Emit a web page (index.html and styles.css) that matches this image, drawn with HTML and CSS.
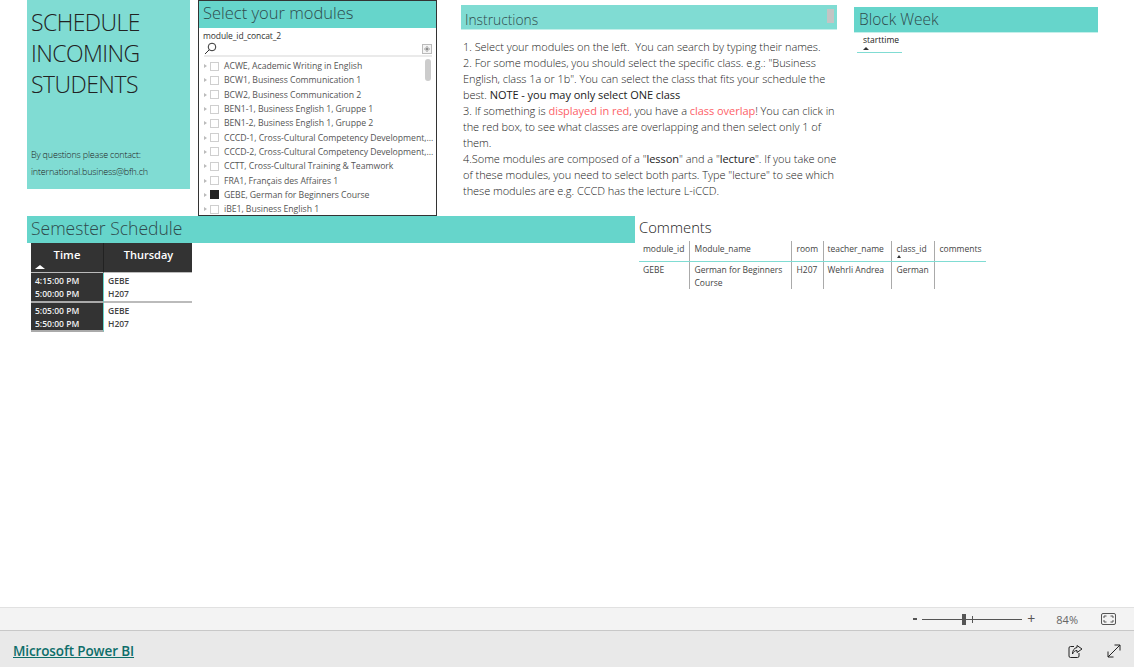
FILE: index.html
```html
<!DOCTYPE html>
<html lang="en">
<head>
  <meta charset="UTF-8">
  <meta name="viewport" content="width=device-width, initial-scale=1.0">
  <title>Schedule Incoming Students</title>
  <link rel="stylesheet" href="styles.css">
</head>
<body>
  <main class="report">
    <div class="top-row">
      <section class="title-card">
        <h1>SCHEDULE<br>INCOMING<br>STUDENTS</h1>
        <p>By questions please contact:<br>international.business@bfh.ch</p>
      </section>

      <section class="slicer">
        <h2 class="band">Select your modules</h2>
        <div class="slicer-name">module_id_concat_2</div>
        <div class="slicer-search">
          <svg width="13" height="13" viewBox="0 0 13 13" fill="none" stroke="#333"><circle cx="8" cy="5" r="3.8"/><path d="M5.2 7.8 1 12"/></svg>
          <span class="expand-box"><svg width="9" height="9" viewBox="0 0 9 9" fill="none" stroke="#666"><path d="M0 4.500h3.500M9 4.500H5.500M4.500 0v3.500M4.500 9V5.500M2.500 2.500l4 4M6.500 2.500l-4 4"/></svg></span>
        </div>
        <div class="slicer-list">
          <ul>
            <li><i class="caret"></i><i class="check"></i>ACWE, Academic Writing in English</li>
            <li><i class="caret"></i><i class="check"></i>BCW1, Business Communication 1</li>
            <li><i class="caret"></i><i class="check"></i>BCW2, Business Communication 2</li>
            <li><i class="caret"></i><i class="check"></i>BEN1-1, Business English 1, Gruppe 1</li>
            <li><i class="caret"></i><i class="check"></i>BEN1-2, Business English 1, Gruppe 2</li>
            <li><i class="caret"></i><i class="check"></i>CCCD-1, Cross-Cultural Competency Development,...</li>
            <li><i class="caret"></i><i class="check"></i>CCCD-2, Cross-Cultural Competency Development,...</li>
            <li><i class="caret"></i><i class="check"></i>CCTT, Cross-Cultural Training &amp; Teamwork</li>
            <li><i class="caret"></i><i class="check"></i>FRA1, Français des Affaires 1</li>
            <li><i class="caret"></i><i class="check on"></i>GEBE, German for Beginners Course</li>
            <li><i class="caret"></i><i class="check"></i>iBE1, Business English 1</li>
          </ul>
          <span class="scroll-thumb"></span>
        </div>
      </section>

      <section class="instructions">
        <h2 class="band band-light">Instructions<span class="band-thumb"></span></h2>
        <p>1. Select your modules on the left.&nbsp; You can search by typing their names.<br>
        2. For some modules, you should select the specific class. e.g.: "Business English, class 1a or 1b". You can select the class that fits your schedule the best. <b>NOTE - you may only select ONE class</b><br>
        3. If something is <em>displayed in red</em>, you have a <em>class overlap</em>! You can click in the red box, to see what classes are overlapping and then select only 1 of them.<br>
        4.Some modules are composed of a "<b>lesson</b>" and a "<b>lecture</b>". If you take one of these modules, you need to select both parts. Type "lecture" to see which these modules are e.g. CCCD has the lecture L-iCCD.</p>
      </section>

      <section class="block-week">
        <h2 class="band">Block Week</h2>
        <div class="mini-head">
          <span>starttime</span>
          <i class="sort-up"></i>
        </div>
      </section>
    </div>

    <div class="bottom-row">
      <section class="semester">
        <h2 class="band">Semester Schedule</h2>
        <div class="timetable">
          <div class="tt-head tt-time">Time<i class="sort-up white"></i></div>
          <div class="tt-head tt-day">Thursday</div>
          <div class="tt-slot">4:15:00 PM<br>5:00:00 PM</div>
          <div class="tt-cell">GEBE<br>H207</div>
          <div class="tt-slot">5:05:00 PM<br>5:50:00 PM</div>
          <div class="tt-cell">GEBE<br>H207</div>
        </div>
      </section>

      <section class="comments">
        <h2>Comments</h2>
        <table>
          <colgroup>
            <col class="c1"><col class="c2"><col class="c3"><col class="c4"><col class="c5"><col class="c6">
          </colgroup>
          <thead>
            <tr>
              <th>module_id</th>
              <th>Module_name</th>
              <th>room</th>
              <th>teacher_name</th>
              <th>class_id<i class="sort-up"></i></th>
              <th>comments</th>
            </tr>
          </thead>
          <tbody>
            <tr>
              <td>GEBE</td>
              <td>German for Beginners Course</td>
              <td>H207</td>
              <td>Wehrli Andrea</td>
              <td>German</td>
              <td></td>
            </tr>
          </tbody>
        </table>
      </section>
    </div>
  </main>

  <div class="zoom-bar">
    <span class="zoom-minus"></span>
    <div class="zoom-track"><span class="zoom-tick"></span><span class="zoom-thumb"></span></div>
    <span class="zoom-plus">+</span>
    <span class="zoom-value">84%</span>
    <svg class="fit-icon" width="15" height="12" viewBox="0 0 15 12" fill="none" stroke="#555"><rect x="0.500" y="0.500" width="14" height="11" rx="1.500"/><path d="M3 5V3h2.500M12 5V3H9.500M3 7v2h2.500M12 7v2H9.500"/></svg>
  </div>

  <footer class="footer">
    <a href="#">Microsoft Power BI</a>
    <div class="footer-icons">
      <svg width="15" height="15" viewBox="0 0 15 15" fill="none" stroke="#222"><path d="M6 2.500H2.500a1.500 1.500 0 0 0-1.500 1.500v8a1.500 1.500 0 0 0 1.500 1.500h7a1.500 1.500 0 0 0 1.500-1.500V9"/><path d="M9 1.500 14 5 9 8.500V6.500C7 6.500 5.500 7.500 4.500 10 4.500 6.500 6 4 9 3.500z"/></svg>
      <svg width="14" height="14" viewBox="0 0 14 14" fill="none" stroke="#222"><path d="M1 13 13 1M7.500 1H13v5.500M1 7.500V13h5.500"/></svg>
    </div>
  </footer>
</body>
</html>
```

FILE: styles.css
```css
* {
  box-sizing: border-box;
}

body {
  display: flex;
  flex-direction: column;
  height: 100vh;
  margin: 0;
  overflow: hidden;
  font-family: 'Open Sans', 'Noto Sans', Arial, sans-serif;
  color: #333;
  background: #fff;
}

h1, h2, p, ul {
  margin: 0;
  padding: 0;
}

.report {
  flex: 1;
  padding-left: 27px;
}

.top-row {
  display: flex;
  align-items: flex-start;
  height: 216px;
}

.bottom-row {
  display: flex;
  align-items: flex-start;
}

/* Teal title bars */
.band {
  background: #66d5cb;
  font-weight: 300;
  color: #2f4a4c;
}

.band-light {
  background: #80dcd3;
}

/* Title card */
.title-card {
  width: 163px;
  height: 189px;
  margin-right: 8px;
  padding: 7px 4px;
  background: #80dcd3;
}

.title-card h1 {
  font-size: 23px;
  font-weight: 300;
  line-height: 31px;
  color: #222;
  letter-spacing: -0.550px;
}

.title-card p {
  margin-top: 46px;
  font-size: 9px;
  line-height: 17px;
  font-weight: 300;
  color: #222;
  letter-spacing: -0.180px;
}

/* Module slicer */
.slicer {
  width: 239px;
  height: 216px;
  margin-right: 24px;
  border: 1px solid #333;
  overflow: hidden;
}

.slicer .band {
  height: 27px;
  padding-left: 4px;
  font-size: 16.500px;
  line-height: 24px;
}

.slicer-name {
  padding: 1px 4px 0;
  font-size: 8.500px;
  line-height: 13px;
  letter-spacing: -0.100px;
}

.slicer-search {
  display: flex;
  justify-content: space-between;
  align-items: center;
  height: 15px;
  margin: 0 4px 0 5px;
  border-bottom: 2px solid #eaeaea;
}

.expand-box {
  display: flex;
  align-items: center;
  justify-content: center;
  width: 10px;
  height: 10px;
  border: 1px solid #bbb;
  background: #f4f4f4;
}

.expand-box svg {
  width: 6px;
  height: 6px;
}

.slicer-list {
  position: relative;
  padding: 2px 0 0 5px;
}

.slicer-list li {
  display: flex;
  align-items: center;
  height: 14.300px;
  font-size: 8.700px;
  color: #555;
  letter-spacing: -0.040px;
  list-style: none;
  white-space: nowrap;
}

.caret {
  flex: none;
  width: 0;
  height: 0;
  margin-right: 3px;
  border-left: 3px solid #bbb;
  border-top: 2.500px solid transparent;
  border-bottom: 2.500px solid transparent;
}

.check {
  flex: none;
  width: 9px;
  height: 9px;
  margin-right: 5px;
  border: 1.500px solid #cfcfcf;
}

.check.on {
  background: #222;
  border-color: #222;
}

.scroll-thumb {
  position: absolute;
  top: 2px;
  right: 5px;
  width: 6px;
  height: 22px;
  border-radius: 3px;
  background: #ccc;
}

/* Instructions */
.instructions {
  width: 376px;
  margin: 5px 17px 0 0;
}

.instructions .band {
  position: relative;
  height: 25px;
  padding-left: 4px;
  border-bottom: 1px solid #c4efea;
  font-size: 13.800px;
  line-height: 29px;
}

.band-thumb {
  position: absolute;
  top: 4px;
  right: 3px;
  width: 7px;
  height: 14px;
  background: #c4c4c4;
}

.instructions p {
  width: 378px;
  padding: 9px 0 0 2px;
  font-size: 11px;
  line-height: 16px;
  font-weight: 300;
  color: #222;
  letter-spacing: -0.040px;
}

.instructions b {
  font-weight: 400;
}

.instructions em {
  font-style: normal;
  font-weight: 400;
  color: #fd5f68;
}

/* Block week */
.block-week {
  width: 244px;
  margin-top: 7px;
}

.block-week .band {
  height: 26px;
  padding-left: 5px;
  border-bottom: 1px solid #c4efea;
  font-size: 15.500px;
  line-height: 24px;
}

.mini-head {
  width: 45px;
  height: 20px;
  margin-left: 3px;
  padding-left: 6px;
  border-bottom: 1px solid #80dcd3;
  font-size: 8.500px;
  line-height: 14px;
  color: #222;
}

.sort-up {
  display: block;
  width: 0;
  height: 0;
  border-left: 3px solid transparent;
  border-right: 3px solid transparent;
  border-bottom: 3px solid #333;
}

/* Semester timetable */
.semester {
  width: 608px;
  margin-right: 4px;
}

.semester .band {
  height: 27px;
  padding-left: 4px;
  font-size: 17.500px;
  line-height: 25px;
}

.timetable {
  display: grid;
  grid-template-columns: 73px 88px;
  margin-left: 4px;
}

.tt-head {
  position: relative;
  height: 30px;
  background: #333;
  color: #fff;
  text-align: center;
  font-size: 11.300px;
  line-height: 23px;
  font-weight: 600;
  border-bottom: 1px solid #bbb;
}

.tt-time {
  border-right: 1px solid #222;
}

.tt-day {
  padding-left: 1px;
  font-size: 11px;
}

.sort-up.white {
  position: absolute;
  left: 4px;
  bottom: 3px;
  border-left-width: 5px;
  border-right-width: 5px;
  border-bottom: 4px solid #fff;
}

.tt-slot,
.tt-cell {
  height: 30px;
  padding: 1px 0 0 4px;
  font-size: 8.500px;
  line-height: 13px;
  font-weight: 600;
}

.tt-slot {
  background: #333;
  color: #f2f2f2;
  border-bottom: 2px solid #aaa;
  border-right: 1px solid #66d5cb;
}

.tt-slot:nth-last-child(2) {
  height: 29px;
}

.tt-cell {
  color: #444;
  border-bottom: 2px solid #bbb;
}

.tt-cell:last-child {
  height: 29px;
  border-bottom: 0;
}

/* Comments table */
.comments {
  margin-left: -1px;
}

.comments h2 {
  height: 25px;
  padding-left: 1px;
  font-size: 14.800px;
  font-weight: 300;
  line-height: 23px;
  color: #222;
}

.comments table {
  width: 347px;
  margin-left: 1px;
  table-layout: fixed;
  border-collapse: collapse;
  font-size: 8.500px;
  color: #444;
}

.c1 { width: 50px; }
.c2 { width: 102px; }
.c3 { width: 32px; }
.c4 { width: 68px; }
.c5 { width: 43px; }
.c6 { width: 52px; }

.comments th,
.comments td {
  padding: 1px 4px 0 5px;
  vertical-align: top;
  text-align: left;
  font-weight: 400;
  line-height: 13px;
  border-right: 1px solid #aaa;
}

.comments th:first-child,
.comments td:first-child,
.comments th:nth-child(4),
.comments td:nth-child(4) {
  padding-left: 4px;
}

.comments th:last-child,
.comments td:last-child {
  border-right: 0;
}

.comments th {
  height: 20px;
  white-space: nowrap;
  border-bottom: 1px solid #80dcd3;
}

.comments td {
  height: 27px;
  padding-top: 1px;
}

.comments .sort-up {
  border-left-width: 2.500px;
  border-right-width: 2.500px;
}

/* Bottom bars */
.zoom-bar {
  display: flex;
  align-items: center;
  justify-content: flex-end;
  height: 24px;
  padding-right: 18px;
  background: #f3f3f3;
  border-top: 1px solid #e1e1e1;
  border-bottom: 1px solid #c8c8c8;
}

.zoom-minus {
  width: 4px;
  height: 2px;
  margin-right: 5px;
  background: #555;
}

.zoom-track {
  position: relative;
  width: 100px;
  height: 1px;
  background: #555;
}

.zoom-thumb {
  position: absolute;
  top: -5px;
  left: 40px;
  width: 4px;
  height: 11px;
  background: #555;
}

.zoom-tick {
  position: absolute;
  top: -3px;
  left: 50px;
  width: 1px;
  height: 7px;
  background: #555;
}

.zoom-plus {
  margin-left: 5px;
  font-size: 14px;
  line-height: 14px;
  color: #555;
}

.zoom-value {
  margin: 0 23px 0 21px;
  font-size: 11px;
  color: #666;
}

.footer {
  display: flex;
  align-items: center;
  justify-content: space-between;
  height: 36px;
  padding: 4px 13px 0;
  background: #e9e9e9;
}

.footer a {
  font-size: 13.500px;
  font-weight: 600;
  color: #0e6e6a;
  letter-spacing: -0.120px;
}

.footer-icons {
  display: flex;
  gap: 24px;
}
```
